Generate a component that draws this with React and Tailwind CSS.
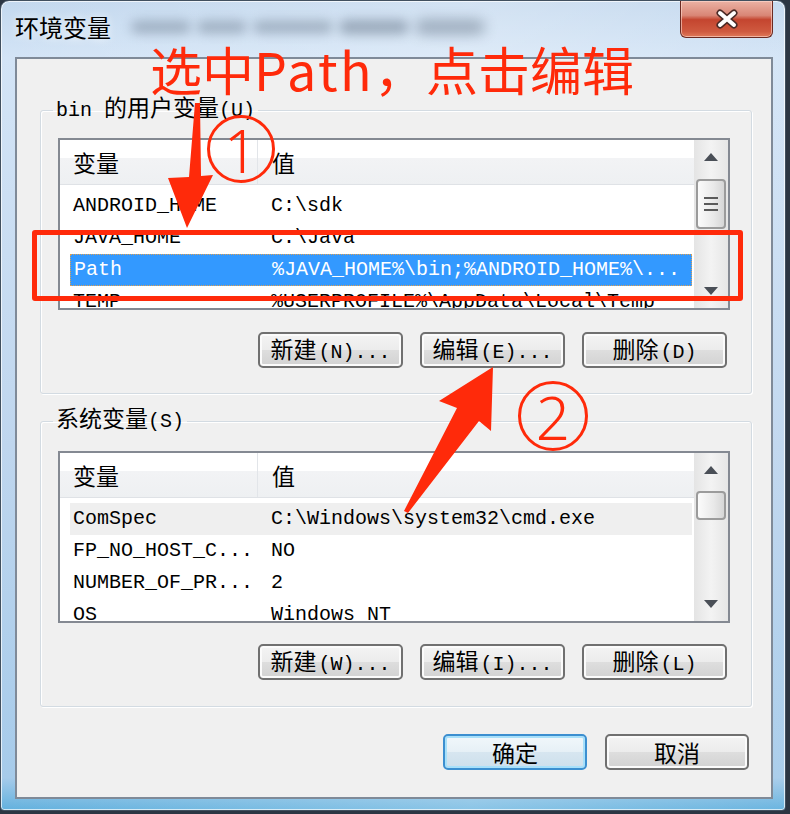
import React from 'react';

const MONO = "font-['Liberation_Mono','Noto_Sans_CJK_SC',monospace]";
const CJK = "font-['Noto_Sans_CJK_SC',sans-serif]";

const userVars = [
  { name: 'ANDROID_HOME', value: 'C:\\sdk' },
  { name: 'JAVA_HOME', value: 'C:\\Java' },
  { name: 'Path', value: '%JAVA_HOME%\\bin;%ANDROID_HOME%\\...', selected: true },
  { name: 'TEMP', value: '%USERPROFILE%\\AppData\\Local\\Temp' },
];

const systemVars = [
  { name: 'ComSpec', value: 'C:\\Windows\\system32\\cmd.exe', hover: true },
  { name: 'FP_NO_HOST_C...', value: 'NO' },
  { name: 'NUMBER_OF_PR...', value: '2' },
  { name: 'OS', value: 'Windows_NT' },
];

const Triangle = ({ up }) => (
  <svg width="14" height="8" viewBox="0 0 14 8">
    <polygon points={up ? '7,0 14,8 0,8' : '0,0 14,0 7,8'} fill="#4a4f57" />
  </svg>
);

const ScrollBar = ({ thumbTop, thumbHeight, grip }) => (
  <div className="w-[34px] flex flex-col bg-[linear-gradient(to_right,#e4e4e4,#f3f3f3_50%,#e6e6e6)]">
    <div className="h-[34px] shrink-0 flex items-center justify-center">
      <Triangle up />
    </div>
    <div
      className={`mx-[2px] shrink-0 rounded-[4px] border-2 border-[#9b9b9b] bg-[linear-gradient(to_right,#fbfbfb,#e9e9e9_60%,#d6d6d6)] flex flex-col items-center justify-center gap-[4px] ${thumbTop} ${thumbHeight}`}
    >
      {grip && (
        <>
          <div className="w-[14px] h-[2px] bg-[#5a5a5a]" />
          <div className="w-[14px] h-[2px] bg-[#5a5a5a]" />
          <div className="w-[14px] h-[2px] bg-[#5a5a5a]" />
        </>
      )}
    </div>
    <div className="flex-1" />
    <div className="h-[34px] shrink-0 flex items-center justify-center">
      <Triangle />
    </div>
  </div>
);

const VarList = ({ rows, thumbTop, thumbHeight, grip }) => (
  <div className="h-[172px] border-2 border-[#848992] bg-white flex overflow-hidden">
    <div className="flex-1 flex flex-col overflow-hidden">
      <div className={`h-[45px] shrink-0 flex border-b border-[#dfe2e6] bg-[linear-gradient(to_bottom,#ffffff_0%,#ffffff_42%,#f2f3f5_42%,#eef0f2_100%)] text-[23px] leading-none text-black ${CJK}`}>
        <div className="w-[198px] pl-[13px] flex items-center border-r border-[#e2e5e9]">变量</div>
        <div className="pl-[14px] flex items-center">值</div>
      </div>
      <div className={`pt-[5px] text-[20px] leading-none ${MONO}`}>
        {rows.map((r) => (
          <div
            key={r.name}
            className={`h-[32px] ml-[10px] mr-[2px] flex items-center whitespace-nowrap ${
              r.selected
                ? 'bg-[#3399ff] text-white border border-dotted border-[#e0a050]'
                : r.hover
                ? 'bg-[#efefef] text-black'
                : 'text-black'
            }`}
          >
            <div className="w-[201px] pl-[3px]">{r.name}</div>
            <div>{r.value}</div>
          </div>
        ))}
      </div>
    </div>
    <ScrollBar thumbTop={thumbTop} thumbHeight={thumbHeight} grip={grip} />
  </div>
);

const WinButton = ({ cjk, rest, focused, wide }) => (
  <div
    className={`${wide ? 'w-[144px]' : 'w-[145px]'} h-[36px] rounded-[5px] border-2 flex items-center justify-center text-black ${
      focused
        ? 'border-[#3c8fd0] bg-[linear-gradient(to_bottom,#f1f7fb_0%,#e6f0f6_50%,#d7e6f0_50%,#cddfec_100%)] shadow-[inset_0_0_0_2px_#a8e0fa]'
        : 'border-[#707070] bg-[linear-gradient(to_bottom,#f4f4f4_0%,#ececec_50%,#dedede_50%,#d2d2d2_100%)] shadow-[inset_0_0_0_2px_#fbfbfb]'
    }`}
  >
    <span className="flex items-baseline">
      <span className={`text-[23px] leading-none ${CJK}`}>{cjk}</span>
      {rest && <span className={`text-[20px] leading-none ml-[2px] ${MONO}`}>{rest}</span>}
    </span>
  </div>
);

const GroupBox = ({ legend, children, className }) => (
  <fieldset
    className={`border border-[#d3dbe2] rounded-[3px] shadow-[inset_1px_1px_0_#ffffff,1px_1px_0_#ffffff] pl-[17px] pr-[21px] ${className}`}
  >
    <legend className="ml-[-5px] px-[3px] h-[24px] leading-none text-black">
      <div className="h-[24px] flex items-baseline mt-[-3px]">{legend}</div>
    </legend>
    {children}
  </fieldset>
);

const Annotations = () => (
  <div className="absolute inset-0 pointer-events-none">
    <div className={`absolute left-[150px] top-[43px] text-[52px] leading-none text-[#ff2a0a] whitespace-nowrap ${CJK}`}>
      选中<span className="tracking-[2.5px]">Path</span>，点击编辑
    </div>
    <div className="absolute left-[32px] top-[230px] w-[711px] h-[71px] border-[5px] border-[#ff2a0a] rounded-[3px]" />
    <div className="absolute left-[207px] top-[115px] w-[68px] h-[68px] rounded-full border-[3px] border-[#ff2a0a] flex items-center justify-center">
      <span className="text-[60px] leading-none text-[#ff2a0a] font-['Noto_Sans',sans-serif] font-light mt-[2px]">1</span>
    </div>
    <div className="absolute left-[518px] top-[381px] w-[70px] h-[70px] rounded-full border-[3px] border-[#ff2a0a] flex items-center justify-center">
      <span className="text-[60px] leading-none text-[#ff2a0a] font-['Noto_Sans',sans-serif] font-light mt-[2px]">2</span>
    </div>
    <svg className="absolute left-0 top-0" width="790" height="814" viewBox="0 0 790 814">
      <polygon points="195,103 200,103 201,176 213,175 187,228 168,178 189,177" fill="#ff2a0a" />
      <polygon points="493,367 491,431 479,421 408,513 404,511 457,408 439,401" fill="#ff2a0a" />
    </svg>
  </div>
);

export default function App() {
  return (
    <div className="w-[790px] h-[814px] bg-[#2c3643] relative overflow-hidden">
      <div className="w-[786px] h-[811px] rounded-t-[9px] rounded-b-[4px] border border-[#41505f] bg-[linear-gradient(to_right,rgba(255,255,255,0)_0%,rgba(255,255,255,0.25)_60%,rgba(255,255,255,0.05)_100%),linear-gradient(to_bottom,#c3d8ee_0%,#d3e4f6_7%,#bfd6ee_55%,#a6cbea_96%,#62b1de_100%)] shadow-[inset_0_0_0_1px_rgba(255,255,255,0.7)] flex flex-col pl-[14px] pr-[12px] pb-[11px]">
        {/* title bar */}
        <div className="h-[56px] shrink-0 flex items-start justify-between">
          <div className="flex items-center pt-[11px]">
            <span className={`text-[24px] leading-[30px] text-black [text-shadow:0_0_8px_rgba(255,255,255,0.95)] ${CJK}`}>
              环境变量
            </span>
            <div className="flex items-center gap-[6px] ml-[20px] opacity-45">
              <div className="w-[60px] h-[12px] rounded-full bg-[#5d6d80] blur-[6px]" />
              <div className="w-[50px] h-[12px] rounded-full bg-[#5d6d80] blur-[6px]" />
              <div className="w-[80px] h-[12px] rounded-full bg-[#5d6d80] blur-[6px]" />
              <div className="w-[70px] h-[14px] rounded-full bg-[#4d5d70] blur-[6px]" />
              <div className="w-[70px] h-[14px] rounded-full bg-[#4d5d70] blur-[7px]" />
            </div>
          </div>
          <div className="w-[93px] h-[37px] rounded-b-[6px] border border-t-0 border-[#6b2a22] bg-[linear-gradient(to_bottom,#ebb2a4_0%,#d98676_40%,#c4452f_52%,#cf5a40_85%,#e07a5a_100%)] shadow-[inset_0_0_0_1px_rgba(255,220,210,0.6)] flex items-center justify-center">
            <svg width="30" height="20" viewBox="0 0 30 20">
              <path d="M8 4 L22 16 M22 4 L8 16" stroke="#4a2a26" strokeWidth="7" strokeLinecap="round" />
              <path d="M8 4 L22 16 M22 4 L8 16" stroke="#ffffff" strokeWidth="4" strokeLinecap="round" />
            </svg>
          </div>
        </div>

        {/* client area */}
        <div className="flex-1 bg-[#f0f0f0] border-2 border-[#7f8a98] pl-[23px] pr-[19px] pt-[39px] flex flex-col">
          <GroupBox
            className="pt-[16px] pb-[25px]"
            legend={
              <>
                <span className={`text-[20px] ${MONO}`}>bin&nbsp;</span>
                <span className={`text-[23px] ${CJK}`}>的用户变量</span>
                <span className={`text-[20px] ${MONO}`}>(U)</span>
              </>
            }
          >
            <VarList rows={userVars} thumbTop="mt-[5px]" thumbHeight="h-[50px]" grip />
            <div className="flex justify-end gap-[17px] mt-[22px] mr-[3px]">
              <WinButton cjk="新建" rest="(N)..." />
              <WinButton cjk="编辑" rest="(E)..." />
              <WinButton cjk="删除" rest="(D)" />
            </div>
          </GroupBox>

          <GroupBox
            className="mt-[15px] pt-[18px] pb-[26px]"
            legend={
              <>
                <span className={`text-[23px] ${CJK}`}>系统变量</span>
                <span className={`text-[20px] ${MONO}`}>(S)</span>
              </>
            }
          >
            <VarList rows={systemVars} thumbTop="mt-[4px]" thumbHeight="h-[29px]" />
            <div className="flex justify-end gap-[17px] mt-[21px] mr-[3px]">
              <WinButton cjk="新建" rest="(W)..." />
              <WinButton cjk="编辑" rest="(I)..." />
              <WinButton cjk="删除" rest="(L)" />
            </div>
          </GroupBox>

          <div className="flex justify-end gap-[18px] mt-[27px] mr-[3px]">
            <WinButton cjk="确定" focused wide />
            <WinButton cjk="取消" wide />
          </div>
        </div>
      </div>
      <Annotations />
    </div>
  );
}
